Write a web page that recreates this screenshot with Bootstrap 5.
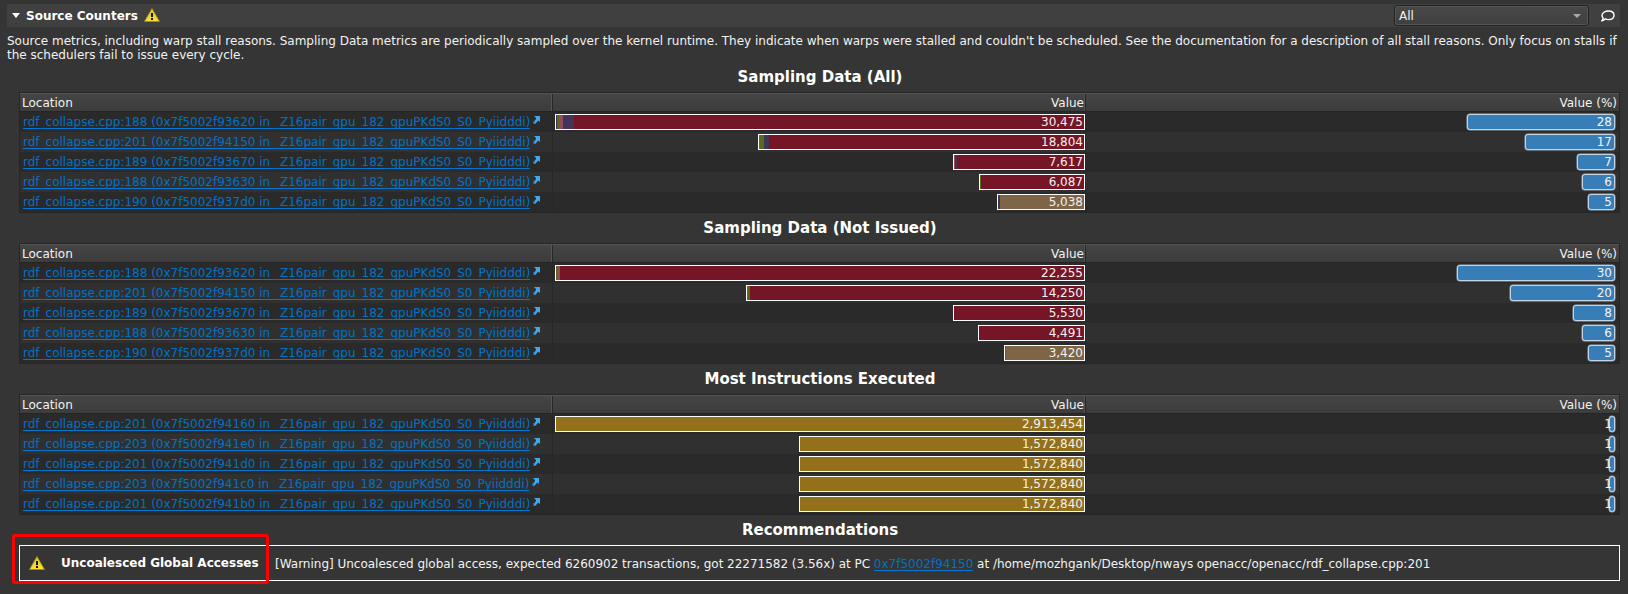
<!DOCTYPE html>
<html lang="en"><head><meta charset="utf-8"><title>Source Counters</title>
<link href="https://cdn.jsdelivr.net/npm/bootstrap@5.3.0/dist/css/bootstrap.min.css" rel="stylesheet">
<style>
body{background:#353535;color:#f2f2f2;font:12px/14px "DejaVu Sans",sans-serif;height:594px;overflow:hidden}
.page{padding:4px 8px 0 7px}
.topbar{height:23px;background:#404040;padding:0 4px 0 5px}
.caret{width:0;border:4px solid transparent;border-top:5px solid #fff;border-bottom:0}
.picker{width:195px;height:21px;border:1px solid #222;border-radius:3px;background:linear-gradient(#484848,#404040);box-shadow:inset 0 0 0 1px #555;padding:0 7px 0 4px}
.picker i{width:0;border:4px solid transparent;border-top:4px solid #aaa;border-bottom:0}
.desc{padding-top:7px;height:38px;word-spacing:-.02px}
.sect{height:27px;line-height:24px;font-size:15px;font-weight:bold;text-align:center;padding-left:13px;color:#fff}
.grid-box{margin-left:12px;border:1px solid #262626;height:121px;background:#2a2a2a;width:1601px;margin-bottom:3px}
.line{display:grid;grid-template-columns:532px 533px 1fr;height:20px}
.line:nth-child(odd){background:#303030}
.line>div{padding-top:2px;position:relative}
.line>div+div{border-left:1px solid #272727}
.line.hdr{height:19px;line-height:15px;background:linear-gradient(#454545,#3c3c3c);border-top:1px solid #555;border-bottom:1px solid #252525}
.hdr>div{border-right:1px solid #555}.hdr>div:last-child{border-right:0}
.loc{color:#0072c6;text-decoration:none;line-height:16px;border-bottom:1px solid #0078d4;height:15px;display:inline-block}
.bar{height:16px;border:1px solid #fff;padding-right:1px;line-height:14px;text-align:right;margin-left:auto}
.pct{height:16px;border:1px solid #c4d4e2;border-radius:3px;box-shadow:0 0 0 .5px #9aa7b3;background:#377eb8;margin-left:auto;margin-right:4px;padding-right:2px;line-height:14px;text-align:right}
.pct.thin{display:flex;justify-content:flex-end;padding-right:2px}
.rec{margin-left:12px;width:1601px;height:36px;border:1px solid #fff;padding-left:9px}
.hl{left:12px;top:534px;width:257px;height:50px;border:3px solid #f00;border-radius:3px}
</style></head><body>
<svg width="0" height="0" class="position-absolute"><defs>
<linearGradient id="y" x1="0" y1="0" x2="0" y2="1"><stop offset="0" stop-color="#d9c21c"/><stop offset="1" stop-color="#ffe13a"/></linearGradient>
<symbol id="warn" viewBox="0 0 16 14"><path d="M8 .5 15.5 13.5H.5Z" fill="url(#y)" stroke="#a38f10" stroke-width=".8" stroke-linejoin="round"/><path d="M7 5h2V9H7zM7 10h2V12H7z" fill="#111"/></symbol>
<symbol id="go" viewBox="0 0 7 8"><path d="M1 0H7V6L5.3 4.6 2.2 8 0 7.2 3 3V2Z" fill="#3fa9ee"/><path d="M0 5h1.3V8H0z" fill="#1464b4"/></symbol>
</defs></svg>
<main class="page">
<div class="topbar d-flex align-items-center"><span class="caret"></span><b style="margin-left:6px" class="text-white">Source Counters</b><svg width="16" height="14" style="margin:-2px 0 0 6px"><use href="#warn"/></svg>
<div class="picker ms-auto d-flex align-items-center justify-content-between"><span>All</span><i></i></div>
<svg width="14" height="12" viewBox="0 0 14 12" style="margin:0 1px 0 12px"><path d="M7.5 1C11 1 13 3 13 5.3S11 9.6 7.5 9.6C6.2 9.6 5 9.3 4.2 8.9 3.5 10 2.3 10.7.9 10.8 1.8 9.9 2.2 8.8 2.1 7.9 1.2 7 1 6.2 1 5.3 1 3 4 1 7.5 1Z" fill="none" stroke="#fff" stroke-width="1.4"/></svg></div>
<div class="desc">Source metrics, including warp stall reasons. Sampling Data metrics are periodically sampled over the kernel runtime. They indicate when warps were stalled and couldn't be scheduled. See the documentation for a description of all stall reasons. Only focus on stalls if the schedulers fail to issue every cycle.</div>
<div id="tables"></div>
<div class="sect">Recommendations</div>
<div class="rec d-flex align-items-center"><svg width="16" height="14"><use href="#warn"/></svg><b style="margin-left:16px;width:214px" class="text-white">Uncoalesced Global Accesses</b><span style="word-spacing:-.1px">[Warning] Uncoalesced global access, expected 6260902 transactions, got 22271582 (3.56x) at PC <a class="loc" href="#">0x7f5002f94150</a> at /home/mozhgank/Desktop/nways openacc/openacc/rdf_collapse.cpp:201</span></div>
</main><div class="hl position-absolute"></div>
<script src="https://cdn.jsdelivr.net/npm/bootstrap@5.3.0/dist/js/bootstrap.bundle.min.js"></script>
<script>
const R='#761525',T='#7e6545',G='#937019',O='#5a6b18',P='#8f4c5c',V='#43355a';
// row: source line, address, value, bar width, percent, percent bar width, fill, leading segments [colour, end px]
const data=[['Sampling Data (All)',[
[188,'93620','30,475',530,28,148,R,[[V,1],[O,3],[P,7],[V,18]]],
[201,'94150','18,804',327,17,90,R,[[P,1],[O,5],[V,10]]],
[189,'93670','7,617',132,7,38,R,[[P,1],[V,3]]],
[188,'93630','6,087',106,6,33,R,[[O,1]]],
[190,'937d0','5,038',88,5,27,T,[[V,2]]]]],
['Sampling Data (Not Issued)',[
[188,'93620','22,255',530,30,158,R,[[O,1],[P,4]]],
[201,'94150','14,250',339,20,105,R,[[P,1],[O,3]]],
[189,'93670','5,530',132,8,42,R,[]],
[188,'93630','4,491',107,6,33,R,[]],
[190,'937d0','3,420',81,5,27,T,[[O,1]]]]],
['Most Instructions Executed',[['201','94160','2,913,454',530],['203','941e0','1,572,840',286],['201','941d0','1,572,840',286],['203','941c0','1,572,840',286],['201','941b0','1,572,840',286]].map(r=>[...r,1,6,G,[]])]];
document.getElementById('tables').innerHTML=data.map(([t,rows])=>`<div class="sect">${t}</div><div class="grid-box"><div class="line hdr"><div style="padding-left:2px">Location</div><div class="text-end">Value</div><div class="text-end" style="padding-right:2px">Value (%)</div></div>`+rows.map(([l,a,v,w,p,pw,c,s])=>{let at=0;const g=s.map(([k,e])=>{const r=`${k} ${at}px ${e}px`;at=e;return r}).concat(`${c} ${at}px`).join(',');
return `<div class="line"><div style="padding-left:3px"><a class="loc" href="#">rdf_collapse.cpp:${l} (0x7f5002f${a} in _Z16pair_gpu_182_gpuPKdS0_S0_Pyiidddi)</a><svg width="7" height="8" style="margin:0 0 5px 3px"><use href="#go"/></svg></div><div><div class="bar" style="width:${w}px;background:linear-gradient(90deg,${g})">${v}</div></div><div><div class="pct ${pw<10?'thin':''}" style="width:${pw}px">${p}</div></div></div>`}).join('')+'</div>').join('');
</script></body></html>
